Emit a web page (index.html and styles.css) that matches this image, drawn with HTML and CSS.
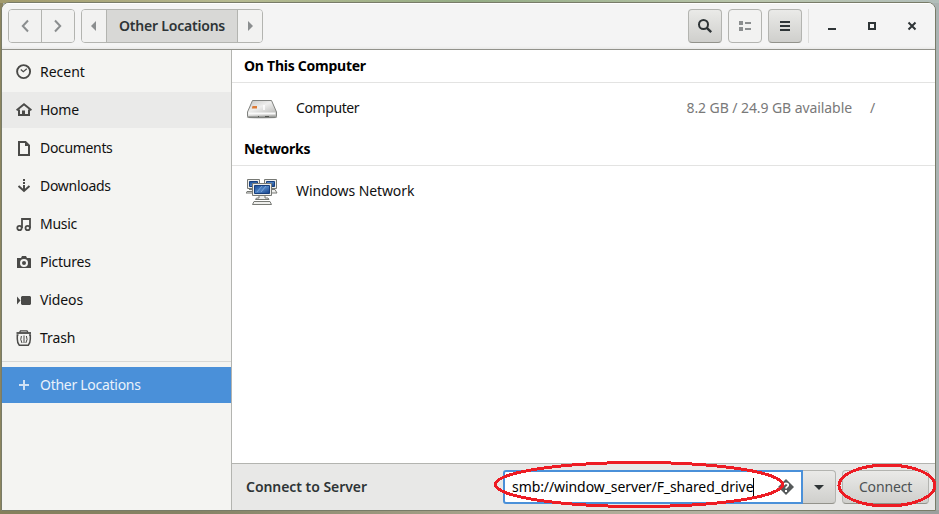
FILE: index.html
```html
<!DOCTYPE html>
<html lang="en">
<head>
<meta charset="utf-8">
<title>Other Locations</title>
<link rel="stylesheet" href="styles.css">
</head>
<body>
<div class="window">
  <header class="headerbar">
    <div class="group nav">
      <button class="flat" aria-label="Back"><svg width="16" height="16"><path d="M11 2.500 5.800 8l5.200 5.500" class="chev"/></svg></button>
      <button class="flat" aria-label="Forward"><svg width="16" height="16"><path d="M5 2.500 10.200 8 5 13.500" class="chev"/></svg></button>
    </div>
    <div class="group path">
      <button class="flat" aria-label="Scroll left"><svg width="16" height="16"><path d="M10 3v10L5 8z" fill="#8b8e8f"/></svg></button>
      <button class="current"><span class="t-path">Other Locations</span></button>
      <button class="flat" aria-label="Scroll right"><svg width="16" height="16"><path d="M6 3v10l5-5z" fill="#8b8e8f"/></svg></button>
    </div>
    <div class="tools">
      <button class="raised" aria-label="Search"><svg width="16" height="16"><circle cx="6.500" cy="6.500" r="4.500" fill="none" stroke="#2e3436" stroke-width="2"/><path d="m9.800 9.800 4.400 4.400" stroke="#2e3436" stroke-width="2.400"/></svg></button>
      <button class="raised off" aria-label="List view"><svg width="16" height="16" fill="#8b8e8f"><path d="M2 3h4v4H2zM8 4h6v2H8zM2 9h4v4H2zM8 10h6v2H8z"/></svg></button>
      <button class="raised" aria-label="Menu"><svg width="16" height="16" fill="#2e3436"><path d="M3 3h10v2H3zM3 7h10v2H3zM3 11h10v2H3z"/></svg></button>
    </div>
    <div class="controls">
      <svg width="16" height="16"><path d="M4 10h8v2H4z" fill="#2e3436"/></svg>
      <svg width="16" height="16"><path d="M5 5h6v6H5z" fill="none" stroke="#2e3436" stroke-width="2"/></svg>
      <svg width="16" height="16"><path d="m4.500 4.500 7 7m0-7-7 7" stroke="#2e3436" stroke-width="2"/></svg>
    </div>
  </header>
  <div class="body">
    <nav class="sidebar">
      <a class="place"><svg width="16" height="16"><circle cx="7.600" cy="7.600" r="6.500" fill="none" stroke="#4a4a48" stroke-width="1.900"/><path d="M4.800 5.500 7.300 7.800 10.800 4.800" fill="none" stroke="#4a4a48" stroke-width="1.200"/></svg><span class="t-recent">Recent</span></a>
      <a class="place hover"><svg width="16" height="16" fill="#4a4a48"><path d="M8 1 0 7.600 1.200 9 8 3.500 14.800 9 16 7.600z"/><path d="M2 7.500h2V12h2V8.500h3V12h3V7.500h2V14H2z"/></svg><span class="t-home">Home</span></a>
      <a class="place"><svg width="16" height="16"><path d="M3 2h6.500L13 5.500V15H3z" fill="none" stroke="#4a4a48" stroke-width="2"/><path d="M9 2v4h4z" fill="#4a4a48"/></svg><span class="t-documents">Documents</span></a>
      <a class="place"><svg width="16" height="16"><path d="M7 1h2v2H7zM7 4h2v2H7zM7 7h2v5H7z" fill="#4a4a48"/><path d="m2.500 8 5.500 5L13.500 8" fill="none" stroke="#4a4a48" stroke-width="2"/></svg><span class="t-downloads">Downloads</span></a>
      <a class="place"><svg width="16" height="16" fill="none" stroke="#4a4a48" stroke-width="1.800"><path d="M6 12V3h8v9"/><circle cx="3.500" cy="12" r="2.200"/><circle cx="11.700" cy="12" r="2.200"/></svg><span class="t-music">Music</span></a>
      <a class="place"><svg width="16" height="16"><path d="M1 4h4l1-2h4l1 2h3q1 0 1 1v9H1z" fill="#4a4a48"/><circle cx="8" cy="9" r="3" fill="none" stroke="#f4f4f2" stroke-width="2"/></svg><span class="t-pictures">Pictures</span></a>
      <a class="place"><svg width="16" height="16"><path d="M6 4h8l1 1v7l-1 1H6l-1-1V5zM1 4.500 4.500 8.500 1 12.500z" fill="#4a4a48"/></svg><span class="t-videos">Videos</span></a>
      <a class="place"><svg width="16" height="16" fill="none" stroke="#4a4a48"><path d="M3.500 2.500 4.500.800h6.500l1 1.700" stroke-width="1.300"/><path d="M0.500 3h14.500" stroke-width="1.800"/><path d="M2.500 5H1.300v4q0 4 2 6.200h9q2-2.200 2-6.200V5H13" stroke-width="1.500"/><path d="M5.400 6q-1.600 3.500.6 7M8 5.500v7.500M10.400 6q1.600 3.500-.6 7" stroke-width="1"/></svg><span class="t-trash">Trash</span></a>
      <hr>
      <a class="place selected"><svg width="16" height="16"><path d="M3 7h4V3h2v4h4v2H9v4H7V9H3z" fill="#d0e1f4"/></svg><span class="t-other">Other Locations</span></a>
    </nav>
    <main class="main">
      <div class="list">
        <h2><span class="t-on">On This Computer</span></h2>
        <div class="row">
          <svg width="32" height="32">
            <defs><linearGradient id="disk" x1="0" y1="0" x2="0.700" y2="1"><stop offset="0" stop-color="#c4c4c2"/><stop offset="0.450" stop-color="#eeeeed"/><stop offset="1" stop-color="#b8b8b6"/></linearGradient></defs>
            <ellipse cx="16" cy="25.500" rx="15.500" ry="1.500" fill="#ddd"/>
            <path d="M6.500 8.500h19l5 11.500v4.500q0 1-1 1h-27q-1 0-1-1V20z" fill="url(#disk)" stroke="#80827f"/>
            <path d="M2.500 20.500h27v2h-27z" fill="#fafafa"/><path d="M2 24.500h28" stroke="#a0a19e"/>
            <path d="M6.500 14H11v2.500H5.800z" fill="#db7a35"/><path d="M18 13v5" stroke="#fff" stroke-width="1.500"/>
            <path d="M19 24.500h4M12 24.500h1" stroke="#555753"/>
          </svg>
          <span class="t-computer">Computer</span>
          <span class="space t-space">8.2 GB / 24.9 GB available</span><span class="mount">/</span>
        </div>
        <h2><span class="t-networks">Networks</span></h2>
        <div class="row">
          <svg width="32" height="32">
            <defs><linearGradient id="screen" x1="0" y1="0" x2="1" y2="1"><stop offset="0" stop-color="#174b95"/><stop offset="0.500" stop-color="#4f83c4"/><stop offset="1" stop-color="#12408a"/></linearGradient></defs>
            <g stroke="#777974" fill="#eeeeec">
              <path d="M1.500 4.500h12v9h-12zM18.500 4.500h12v9h-12zM3 14.500h5v2H1l-1 1.500h8M24 14.500h5l2 3.500h-7"/>
              <path d="M3.500 6.500h8v5h-8zM20.500 6.500h8v5h-8z" fill="url(#screen)" stroke="#173f7d"/>
              <path d="M6.500 8.500h19v12h-19z"/>
              <path d="M8.500 10.500h15v8h-15z" fill="url(#screen)" stroke="#173f7d"/>
              <path d="M13 20.500h6v2.500h3l1 1.500H9.500l1-1.500H13zM8 26.500h16l1.500 3h-19z"/>
            </g>
            <path d="m11 17 5-6M15 17l5-6" stroke="#79a4d8"/>
          </svg>
          <span class="t-windows">Windows Network</span>
        </div>
      </div>
      <footer class="actionbar">
        <span class="label t-connectto">Connect to Server</span>
        <div class="entry"><span class="t-url">smb://window_server/F_shared_drive</span><i class="caret"></i><svg width="16" height="16"><path d="M8 0 16 8 8 16 0 8z" fill="#565a5b"/><path d="M5.800 6.300q0-2 2.200-2 2.300 0 2.300 1.800 0 1-1.200 1.700Q8 8.400 8 9.600" fill="none" stroke="#fff" stroke-width="1.700"/><path d="M7 11h2v2H7z" fill="#fff"/></svg></div>
        <button class="raised drop" aria-label="Recent servers"><svg width="16" height="16"><path d="M3 6h10l-5 5z" fill="#2e3436"/></svg></button>
        <button class="raised connect"><span class="t-connect">Connect</span></button>
      </footer>
    </main>
  </div>
</div>
<svg class="marks" width="939" height="514" fill="none" stroke="#ed1c24" stroke-width="3" shape-rendering="crispEdges"><ellipse cx="639" cy="484.500" rx="143.500" ry="22"/><ellipse cx="887" cy="485.500" rx="48" ry="20.500"/></svg>
</body>
</html>
```
FILE: styles.css
```css
* { box-sizing: border-box; }
body {
  margin: 0;
  width: 939px;
  height: 514px;
  overflow: hidden;
  padding: 2px 3px 3px 1px;
  font: 14px/20px "Noto Sans", "Open Sans", sans-serif;
  color: #111;
  background:
    linear-gradient(90deg, #a29b6d, #b6ba91 25%, #94ac85 50%, #b9c5ab 80%, #b2beba) top / 100% 3px no-repeat,
    linear-gradient(90deg, #85805b, #858264 20%, #aaa68f 55%, #b5b5a5 80%, #9a9f9d) bottom / 100% 4px no-repeat,
    linear-gradient(90deg, #8c855f 0 3px, #aab3b2 3px);
}
svg { display: block; flex: none; }
span { white-space: nowrap; }
button {
  font: inherit;
  color: #2e3436;
  padding: 0;
  margin: 0;
  border: 0;
  background: none;
  display: flex;
  align-items: center;
  justify-content: center;
}
.window {
  width: 935px;
  height: 509px;
  border: 1px solid #787b68;
  border-radius: 8px 8px 0 0;
  overflow: hidden;
  display: flex;
  flex-direction: column;
  background: #fff;
}
.headerbar {
  height: 47px;
  flex: none;
  display: flex;
  padding: 6px 0 0 6px;
  border-bottom: 1px solid #92928b;
  background: linear-gradient(#fff 0 1px, #f4f4f4 1px 43px, #e9e9e8);
}
.group {
  display: flex;
  height: 34px;
  border: 1px solid #b3b4b0;
  border-radius: 4px;
  overflow: hidden;
}
.group button + button { border-left: 1px solid #b3b4b0; }
.flat { background: #f2f2f1; }
.nav { width: 67px; margin-right: 6px; }
.nav button { flex: 1; }
.chev { fill: none; stroke: #8b8e8f; stroke-width: 2; }
.path { width: 182px; }
.path .flat { width: 25px; flex: none; }
.path .flat:first-child { width: 24px; }
.current { flex: 1; background: #d8d8d6; font-weight: 600; }
.tools { display: flex; gap: 6px; margin-left: auto; }
.raised {
  width: 34px;
  height: 34px;
  border: 1px solid #b3b4b0;
  border-bottom-color: #92928b;
  border-radius: 4px;
  background: linear-gradient(#eaeae8, #cfcfcc);
}
.raised.off { background: #f2f2f1; border-color: #b3b4b0; }
.controls {
  display: flex;
  gap: 24px;
  align-items: center;
  height: 34px;
  width: 127px;
  margin-left: 6px;
  padding-left: 15px;
  border-left: 1px solid #dcdcda;
}
.body { display: flex; flex: 1; min-height: 0; }
.sidebar {
  width: 230px;
  flex: none;
  padding-top: 4px;
  background: #f4f4f2;
  border-right: 1px solid #b3b4b0;
}
.place {
  display: flex;
  align-items: center;
  gap: 8px;
  height: 36px;
  margin-bottom: 2px;
  padding-left: 14px;
}
.hover { background: #eaeae9; }
.sidebar hr { margin: 5px 0; border: 0; height: 1px; background: #d8d8d6; }
.selected { background: #4a90d9; color: #e9f2fb; }
.main { flex: 1; display: flex; flex-direction: column; min-width: 0; }
.list { flex: 1; }
h2 {
  font: inherit;
  font-weight: 700;
  margin: 0;
  padding: 6px 12px;
  height: 33px;
  color: #000;
  border-bottom: 1px solid #e3e3e2;
}
.row { display: flex; align-items: center; height: 50px; padding: 0 14px; }
.row svg { margin-right: 18px; }
.space { margin-left: auto; }
.space, .mount { color: #797979; }
.mount { width: 51px; margin-left: 18px; }
.actionbar {
  height: 47px;
  flex: none;
  display: flex;
  align-items: center;
  padding: 0 6px 0 14px;
  border-top: 1px solid #b3b4b0;
  background: #e8e8e7;
}
.label { font-weight: 600; color: #2e3436; margin-right: auto; }
.entry {
  width: 300px;
  height: 34px;
  display: flex;
  align-items: center;
  padding: 0 7px;
  border: 2px solid #4a90d9;
  border-radius: 3px 0 0 3px;
  background: #fff;
  color: #000;
}
.caret { width: 1px; height: 19px; background: #000; }
.entry svg { margin-left: auto; }
.drop { width: 33px; border-left: 0; border-radius: 0 4px 4px 0; margin-right: 6px; }
.connect { width: 87px; color: #4c5153; }
.marks { position: absolute; left: 0; top: 0; }

/* Tracking per label */
.t-path { letter-spacing: -0.2px; }
.t-home, .t-on, .t-pictures { letter-spacing: -0.25px; }
.t-documents { letter-spacing: -0.33px; }
.t-downloads, .t-other { letter-spacing: -0.28px; }
.t-music, .t-networks { letter-spacing: -0.3px; }
.t-videos, .t-trash, .t-windows { letter-spacing: -0.1px; }
.t-computer { letter-spacing: -0.4px; }
.t-space, .t-url { letter-spacing: -0.08px; }
.t-connectto { letter-spacing: -0.05px; }
.t-connect { letter-spacing: -0.15px; }
```
